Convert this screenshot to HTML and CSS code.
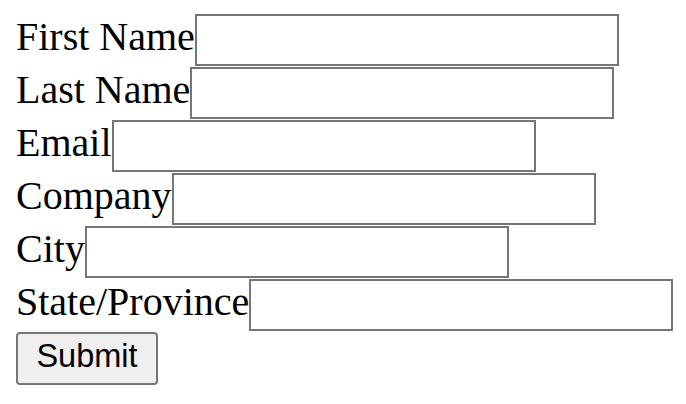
FILE: index.html
```html
<!DOCTYPE html>
<html lang="en">
<head>
  <meta charset="UTF-8">
  <meta name="viewport" content="width=device-width, initial-scale=1.0">
  <title>Contact Form</title>
  <link rel="stylesheet" href="styles.css">
</head>
<body>
  <form id="contactForm" class="form">
    <!-- Datos personales -->
    <div class="row">
      <label for="firstName">First Name</label>
      <input type="text" id="firstName" name="firstName">
    </div>
    <div class="row">
      <label for="lastName">Last Name</label>
      <input type="text" id="lastName" name="lastName">
    </div>
    <div class="row">
      <label for="email">Email</label>
      <input type="text" id="email" name="email">
    </div>
    <div class="row">
      <label for="company">Company</label>
      <input type="text" id="company" name="company">
    </div>
    <div class="row">
      <label for="city">City</label>
      <input type="text" id="city" name="city">
    </div>
    <div class="row">
      <label for="state">State/Province</label>
      <input type="text" id="state" name="state">
    </div>
    <button type="submit" class="submit">Submit</button>
  </form>
</body>
</html>
```

FILE: styles.css
```css
body {
  margin: 14px 4px 14px 16px;
  font-family: "Liberation Serif", "Times New Roman", serif;
  background: #fff;
  color: #000;
}
.form {
  display: flex;
  flex-direction: column;
  align-items: flex-start;
  gap: 1px;
}
.row {
  display: flex;
  align-items: flex-start;
  height: 52px;
}
label {
  flex-shrink: 0;
  font-size: 40px;
  line-height: 46px;
}
input {
  flex-shrink: 0;
  box-sizing: border-box;
  width: 424px;
  height: 52px;
  margin: 0;
  padding: 2px 5px;
  border: 2px solid #767676;
  border-radius: 0;
  font-family: "Liberation Sans", Arial, sans-serif;
  font-size: 33px;
  background: #fff;
}
.submit {
  box-sizing: border-box;
  width: 142px;
  height: 53px;
  margin: 0;
  padding: 0 0 4px;
  border: 2px solid #767676;
  border-radius: 4px;
  background: #efefef;
  font-family: "Liberation Sans", Arial, sans-serif;
  font-size: 32.5px;
  color: #000;
}
```
